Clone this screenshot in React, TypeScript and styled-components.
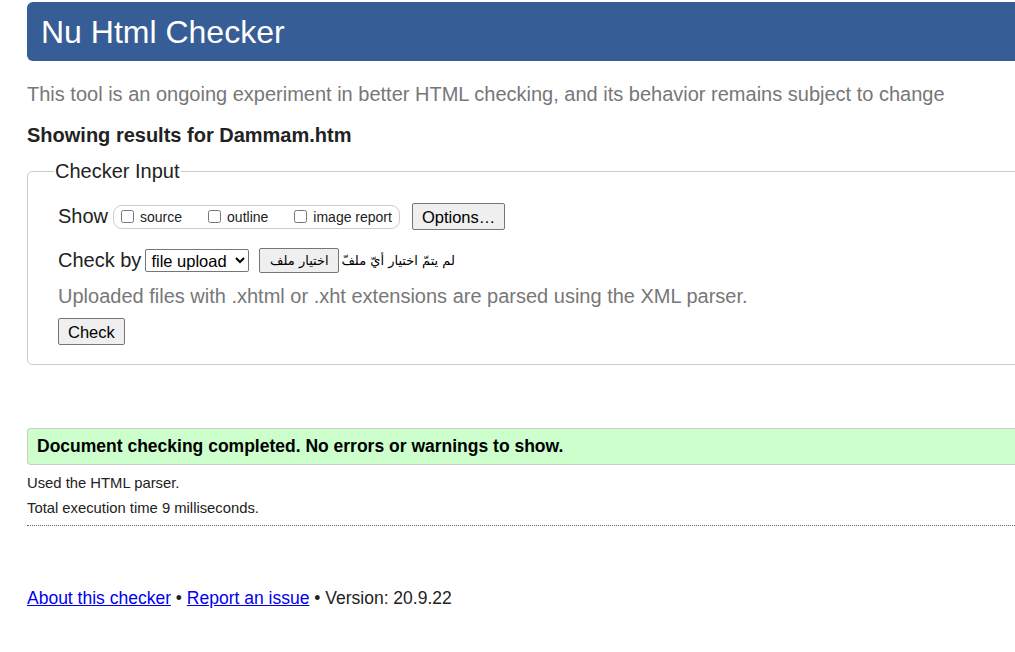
import React from "react";
import styled, { createGlobalStyle } from "styled-components";

const Global = createGlobalStyle`
  html, body { margin: 0; padding: 0; background: #fff; overflow: hidden; }
  body { font-family: "Liberation Sans", Arial, sans-serif; color: #222; }
`;

const Page = styled.div`
  padding: 2px 0 0 27px;
  width: 1080px;
`;

const Header = styled.h1`
  margin: 0;
  height: 59px;
  background: #365d95;
  border-radius: 6px;
  color: #fff;
  font-weight: normal;
  font-size: 32px;
  line-height: 61px;
  padding-left: 14px;
`;

const Intro = styled.p`
  margin: 21px 0 0;
  font-size: 20px;
  line-height: 24px;
  color: #777;
`;

const Results = styled.h2`
  margin: 17px 0 0;
  font-size: 20px;
  line-height: 24px;
  font-weight: bold;
  color: #222;
`;

const Fieldset = styled.fieldset`
  margin: 13px 0 0;
  border: 1px solid #ccc;
  border-radius: 5px;
  padding: 6px 30px 19px 30px;
  min-height: 0;
`;

const Legend = styled.legend`
  font-size: 20px;
  padding: 0 1px;
  margin-left: -4px;
  color: #222;
`;

const Row = styled.div<{ $gap?: number }>`
  display: flex;
  align-items: center;
  margin-top: ${(p) => p.$gap ?? 0}px;
  font-size: 20px;
  color: #222;
`;

const Pill = styled.span`
  display: inline-flex;
  align-items: center;
  border: 1px solid #ccc;
  border-radius: 9px;
  height: 22px;
  margin-left: 5px;
  padding: 0 7px 0 0;
`;

const CheckLabel = styled.label`
  display: inline-flex;
  align-items: center;
  font-size: 14px;
  color: #222;
  margin-right: 19px;
  &:last-child { margin-right: 0; }
  input {
    margin: 0 6px 0 7px;
    width: 13px;
    height: 13px;
  }
`;

const Button = styled.button<{ $ml?: number }>`
  font-family: "Liberation Sans", Arial, sans-serif;
  font-size: 16.5px;
  color: #000;
  background: #efefef;
  border: 1px solid #767676;
  border-radius: 2px;
  padding: 3px 9px;
  margin-left: ${(p) => p.$ml ?? 0}px;
  height: 27px;
  line-height: 18px;
`;

const Select = styled.select`
  font-family: "Liberation Sans", Arial, sans-serif;
  font-size: 16.5px;
  color: #000;
  background: #fff;
  border: 1px solid #767676;
  border-radius: 2px;
  height: 23px;
  width: 104px;
  margin-left: 4px;
  padding: 0 1px;
`;

const FileButton = styled.span`
  display: inline-flex;
  align-items: center;
  justify-content: center;
  box-sizing: border-box;
  width: 80px;
  height: 25px;
  margin-left: 10px;
  background: #efefef;
  border: 1px solid #767676;
  border-radius: 2px;
  font-family: "DejaVu Sans", sans-serif;
  font-size: 13px;
  color: #000;
  direction: rtl;
`;

const FileText = styled.span`
  margin-left: 2px;
  font-family: "DejaVu Sans", sans-serif;
  font-size: 13px;
  color: #000;
  direction: rtl;
`;

const Note = styled.p`
  margin: 11px 0 0;
  font-size: 20px;
  line-height: 24px;
  color: #777;
`;

const Success = styled.div`
  margin-top: 63px;
  background: #ccffcc;
  border: 1px solid #ccc;
  border-right: none;
  border-radius: 4px 0 0 4px;
  height: 35px;
  padding-left: 9px;
  display: flex;
  align-items: center;
  font-size: 17.5px;
  font-weight: bold;
  color: #000;
`;

const Detail = styled.p<{ $mt: number }>`
  margin: ${(p) => p.$mt}px 0 0;
  font-size: 14.8px;
  line-height: 18px;
  color: #222;
`;

const Divider = styled.hr`
  margin: 8px 0 0;
  border: none;
  border-top: 1px dotted #666;
  height: 0;
`;

const Footer = styled.p`
  margin: 62px 0 0;
  font-size: 17.5px;
  color: #222;
  a { color: #0000ee; }
`;

export default function App() {
  return (
    <>
      <Global />
      <Page>
        <Header>Nu Html Checker</Header>
        <Intro>
          This tool is an ongoing experiment in better HTML checking, and its behavior remains subject to change
        </Intro>
        <Results>Showing results for Dammam.htm</Results>
        <Fieldset>
          <Legend>Checker Input</Legend>
          <Row $gap={14}>
            Show
            <Pill>
              <CheckLabel>
                <input type="checkbox" />
                source
              </CheckLabel>
              <CheckLabel>
                <input type="checkbox" />
                outline
              </CheckLabel>
              <CheckLabel>
                <input type="checkbox" />
                image report
              </CheckLabel>
            </Pill>
            <Button $ml={12}>Options…</Button>
          </Row>
          <Row $gap={18}>
            Check by
            <Select defaultValue="file">
              <option value="file">file upload</option>
            </Select>
            <FileButton>اختيار ملف</FileButton>
            <FileText>لم يتمّ اختيار أيّ ملفّ</FileText>
          </Row>
          <Note>Uploaded files with .xhtml or .xht extensions are parsed using the XML parser.</Note>
          <Row $gap={10}>
            <Button>Check</Button>
          </Row>
        </Fieldset>
        <Success>Document checking completed. No errors or warnings to show.</Success>
        <Detail $mt={9}>Used the HTML parser.</Detail>
        <Detail $mt={7}>Total execution time 9 milliseconds.</Detail>
        <Divider />
        <Footer>
          <a href="#">About this checker</a> • <a href="#">Report an issue</a> • Version: 20.9.22
        </Footer>
      </Page>
    </>
  );
}
